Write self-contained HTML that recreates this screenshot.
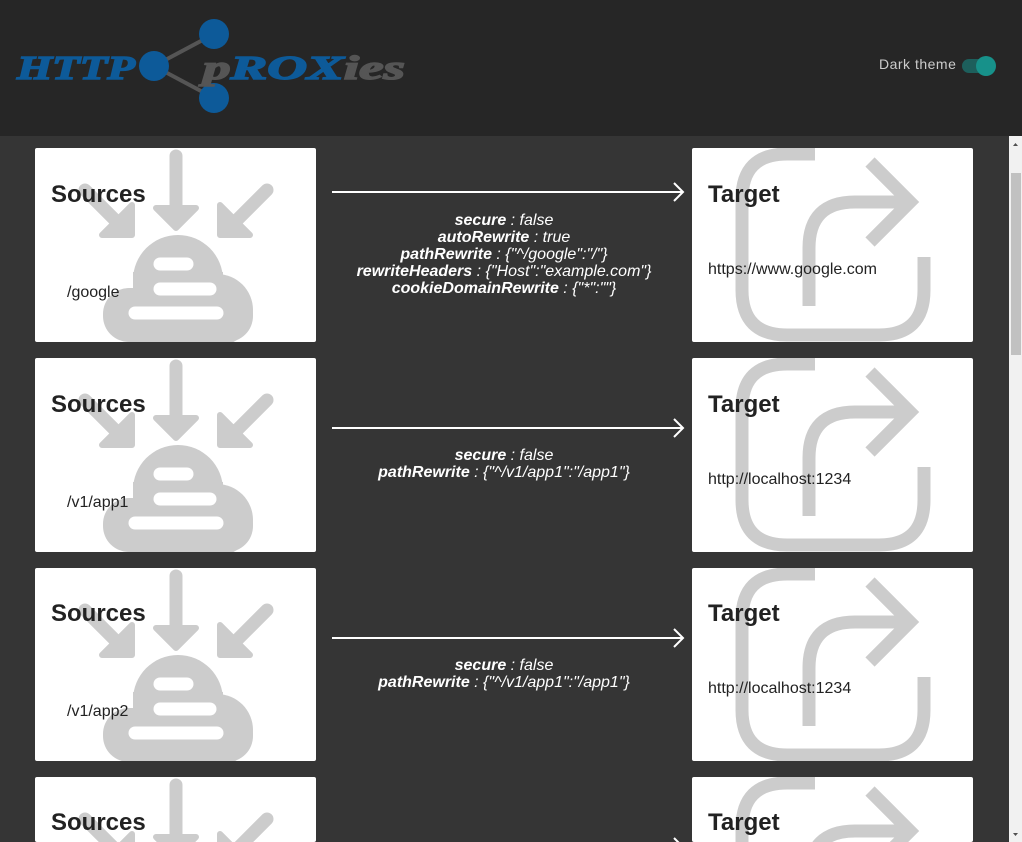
<!DOCTYPE html>
<html style="width:1022px;height:842px;overflow:hidden"><head><meta charset="utf-8"><style>
*{margin:0;padding:0;box-sizing:border-box}
body{width:1022px;height:842px;overflow:hidden;background:#353535;font-family:"Liberation Sans",sans-serif;position:relative}
.hdr{position:absolute;left:0;top:0;width:1022px;height:136px;background:#262626}
.card{position:absolute;width:281px;height:194px;background:#fff;border-radius:2px;overflow:hidden}
.card svg{position:absolute;left:0;top:0}
.card h2{position:absolute;left:16px;top:33px;font-size:24px;font-weight:bold;color:#222}
.card .t{position:absolute;font-size:16px;color:#222}
.mid{position:absolute;left:332px;width:354px}
.mid .ln{position:absolute;left:0;width:350px;height:2px;background:#fff}
.mid svg{position:absolute;left:340px}
.mid .txt{position:absolute;left:0;width:344px;text-align:center;color:#fff;font-style:italic;font-size:16px;line-height:17px}
.mid b{font-weight:bold}
.sb{position:absolute;left:1009px;top:136px;width:13px;height:706px;background:#f1f1f1}
</style></head><body>
<div class="hdr">
<svg width="420" height="136" style="position:absolute;left:0;top:0">
<line x1="154" y1="66" x2="214" y2="34" stroke="#555" stroke-width="4"/>
<line x1="154" y1="66" x2="214" y2="98" stroke="#555" stroke-width="4"/>
<circle cx="154" cy="66" r="15" fill="#0d5a99"/>
<circle cx="214" cy="34" r="15" fill="#0d5a99"/>
<circle cx="214" cy="98" r="15" fill="#0d5a99"/>
<text x="17" y="79" font-family="Liberation Serif" font-weight="bold" font-style="italic" font-size="34" fill="#0d5a99" textLength="118" lengthAdjust="spacingAndGlyphs" stroke="#0d5a99" stroke-width="1.5">HTTP</text>
<text x="203" y="79" font-family="Liberation Serif" font-weight="bold" font-style="italic" font-size="34" textLength="202" lengthAdjust="spacingAndGlyphs" stroke-width="1.5"><tspan fill="#555" stroke="#555">p</tspan><tspan fill="#0d5a99" stroke="#0d5a99">ROX</tspan><tspan fill="#555" stroke="#555">ies</tspan></text>
</svg>
<div style="position:absolute;left:879px;top:56px;font-size:14px;color:#ccc;letter-spacing:0.5px">Dark theme</div>
<div style="position:absolute;left:962px;top:59px;width:32px;height:14px;border-radius:7px;background:#1d5f5c"></div>
<div style="position:absolute;left:976px;top:56px;width:20px;height:20px;border-radius:10px;background:#17918a"></div>
</div>

<svg width="0" height="0" style="position:absolute">
<defs>
<g id="src">
<g stroke="#ccc" stroke-width="13" stroke-linecap="round" fill="none">
<line x1="141" y1="8" x2="141" y2="62"/>
<line x1="50" y1="42" x2="90" y2="82"/>
<line x1="232" y1="42" x2="192" y2="82"/>
</g>
<g fill="#ccc" stroke="#ccc" stroke-width="6" stroke-linejoin="round">
<path d="M121 60 L161 60 L141 80Z"/>
<path d="M97 57 L97 87 L67 87Z"/>
<path d="M185 57 L185 87 L215 87Z"/>
</g>
<g fill="#ccc">
<circle cx="143" cy="132" r="45"/>
<circle cx="182" cy="162" r="36"/>
<rect x="68" y="140" width="150" height="54" rx="26"/>
<rect x="98" y="124" width="90" height="40"/>
</g>
<g stroke="#fff" stroke-width="13" stroke-linecap="round">
<line x1="125" y1="116" x2="152" y2="116"/>
<line x1="125" y1="141" x2="175" y2="141"/>
<line x1="100" y1="165" x2="182" y2="165"/>
</g>
</g>
<g id="tgt" stroke="#ccc" stroke-width="13" fill="none">
<path d="M123 6 L95 6 Q50 6 50 51 L50 142 Q50 187 95 187 L187 187 Q232 187 232 142 L232 109"/>
<path d="M117 158 L117 100 Q117 54 163 54 L218 54"/>
<path d="M178 14 L218 54 L178 94"/>
</g>
</defs>
</svg>

<div class="card" style="left:35px;top:148px"><svg width="281" height="194"><use href="#src"/></svg><h2>Sources</h2><div class="t" style="left:32px;top:136px">/google</div></div>
<div class="mid" style="top:148px"><div class="ln" style="top:43px"></div><svg width="14" height="24" style="top:33px"><path d="M2 2 L11 11 L2 20" stroke="#fff" stroke-width="2" fill="none"/></svg>
<div class="txt" style="top:64px"><b>secure</b> : false<br><b>autoRewrite</b> : true<br><b>pathRewrite</b> : {"^/google":"/"}<br><b>rewriteHeaders</b> : {"Host":"example.com"}<br><b>cookieDomainRewrite</b> : {"*":""}</div></div>
<div class="card" style="left:692px;top:148px"><svg width="281" height="194"><use href="#tgt"/></svg><h2>Target</h2><div class="t" style="left:16px;top:113px">https://www.google.com</div></div>

<div class="card" style="left:35px;top:358px"><svg width="281" height="194"><use href="#src"/></svg><h2>Sources</h2><div class="t" style="left:32px;top:136px">/v1/app1</div></div>
<div class="mid" style="top:358px"><div class="ln" style="top:69px"></div><svg width="14" height="24" style="top:59px"><path d="M2 2 L11 11 L2 20" stroke="#fff" stroke-width="2" fill="none"/></svg>
<div class="txt" style="top:89px"><b>secure</b> : false<br><b>pathRewrite</b> : {"^/v1/app1":"/app1"}</div></div>
<div class="card" style="left:692px;top:358px"><svg width="281" height="194"><use href="#tgt"/></svg><h2>Target</h2><div class="t" style="left:16px;top:113px">http://localhost:1234</div></div>

<div class="card" style="left:35px;top:568px;height:193px"><svg width="281" height="194"><use href="#src"/></svg><h2 style="top:32px">Sources</h2><div class="t" style="left:32px;top:135px">/v1/app2</div></div>
<div class="mid" style="top:568px"><div class="ln" style="top:69px"></div><svg width="14" height="24" style="top:59px"><path d="M2 2 L11 11 L2 20" stroke="#fff" stroke-width="2" fill="none"/></svg>
<div class="txt" style="top:89px"><b>secure</b> : false<br><b>pathRewrite</b> : {"^/v1/app1":"/app1"}</div></div>
<div class="card" style="left:692px;top:568px;height:193px"><svg width="281" height="194"><use href="#tgt"/></svg><h2 style="top:32px">Target</h2><div class="t" style="left:16px;top:112px">http://localhost:1234</div></div>

<div class="card" style="left:35px;top:777px;height:65px"><svg width="281" height="194"><use href="#src"/></svg><h2 style="top:32px">Sources</h2></div>
<div class="mid" style="top:777px"><svg width="14" height="24" style="top:59px"><path d="M2 2 L11 11 L2 20" stroke="#fff" stroke-width="2" fill="none"/></svg></div>
<div class="card" style="left:692px;top:777px;height:65px"><svg width="281" height="194"><use href="#tgt"/></svg><h2 style="top:32px">Target</h2></div>

<div class="sb">
<div style="position:absolute;left:2px;top:37px;width:10px;height:182px;background:#c1c1c1"></div>
<svg width="13" height="706" style="position:absolute;left:0;top:0"><path d="M4 10 L6.5 7 L9 10Z" fill="#505050"/><path d="M4 697 L6.5 700 L9 697Z" fill="#505050"/></svg>
</div>
</body></html>
